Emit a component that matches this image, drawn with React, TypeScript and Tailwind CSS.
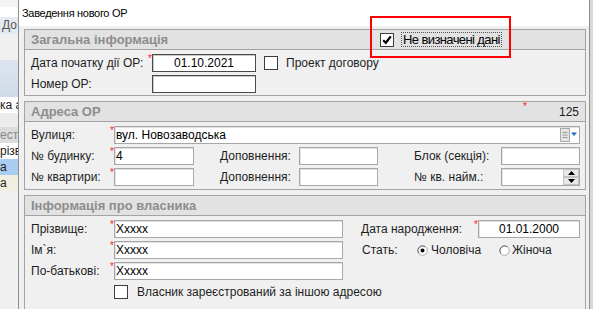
import React from 'react';

// [ 공통 요소 ]
const Star = () => (
  <span className="w-[4px] h-[18px] shrink-0 text-[10px] leading-[10px] text-[#ff2020]">*</span>
);

const Gap4 = () => <span className="w-[4px] shrink-0" />;

const Field = ({ w, value = '', center = false, dark = false, children }: { w: string; value?: string; center?: boolean; dark?: boolean; children?: React.ReactNode }) => (
  <div
    className={`${w} h-[18px] shrink-0 bg-white border flex items-center relative ${dark ? 'border-[#4a4a4a] shadow-[inset_1px_1px_0_#c8c8c8]' : 'border-[#a7a7a7] shadow-[inset_1px_1px_0_#e2e2e2]'} ${center ? 'justify-center' : 'pl-[1px]'}`}
  >
    <span className="text-[12px] text-black leading-none">{value}</span>
    {children}
  </div>
);

const Label = ({ w, children, className = '' }: { w: string; children: React.ReactNode; className?: string }) => (
  <span className={`${w} shrink-0 text-[12px] leading-[18px] text-[#1e1e1e] whitespace-nowrap ${className}`}>{children}</span>
);

const Check = ({ checked = false }: { checked?: boolean }) => (
  <span className="w-[14px] h-[14px] shrink-0 bg-white border border-[#3c3c3c] flex items-center justify-center">
    {checked && (
      <svg width="10" height="10" viewBox="0 0 10 10">
        <path d="M1.2 5.2 L3.8 7.8 L8.8 1.4" fill="none" stroke="#000" strokeWidth="2.2" />
      </svg>
    )}
  </span>
);

const Radio = ({ checked = false }: { checked?: boolean }) => (
  <svg width="11" height="11" viewBox="0 0 11 11" className="shrink-0">
    <circle cx="5.5" cy="5.5" r="4.8" fill="#fff" stroke="#a8a8a8" />
    <path d="M1.8 8.2 A4.6 4.6 0 0 1 8.2 1.8" fill="none" stroke="#6e6e6e" strokeWidth="1" />
    {checked && <circle cx="5.5" cy="5.5" r="2" fill="#000" />}
  </svg>
);

const Group = ({ title, right, children, pb }: { title: string; right?: React.ReactNode; children: React.ReactNode; pb: string }) => (
  <div className="shrink-0 border border-[#a3a3a3] flex flex-col">
    <div className="shrink-0 h-[20px] bg-[#e2e2e2] border-b border-[#a3a3a3] flex items-center pl-[6px] pr-[6px] relative">
      <span className="text-[13px] font-bold text-[#8d8d8d] leading-none">{title}</span>
      {right}
    </div>
    <div className={`flex flex-col gap-[3px] pt-[4px] ${pb} pl-[6px]`}>{children}</div>
  </div>
);

// [ 배경 창 ]
const BackLeft = () => (
  <div className="w-[18px] shrink-0 flex flex-col text-[12px] text-[#222] overflow-hidden whitespace-nowrap">
    <div className="shrink-0 h-[7px] bg-[#f4f4f4]" />
    <div className="shrink-0 h-[10px] bg-white" />
    <div className="shrink-0 h-[17px] bg-[#e4eaf2] pl-[2px] leading-[17px] text-[#555]">До</div>
    <div className="shrink-0 h-[26px] bg-[#f0f0f0]" />
    <div className="shrink-0 h-[37px] bg-gradient-to-b from-[#dde5ef] to-[#cfdbe8]" />
    <div className="shrink-0 h-[16px] bg-white leading-[16px]">ка а</div>
    <div className="shrink-0 h-[14px] bg-[#ececec]" />
    <div className="shrink-0 h-[16px] bg-[#dcdcdc] leading-[16px] text-[#888]">естр</div>
    <div className="shrink-0 h-[16px] bg-white leading-[16px]">різв</div>
    <div className="shrink-0 h-[16px] bg-[#a9cdf0] leading-[16px]">а</div>
    <div className="shrink-0 h-[16px] bg-[#f2eedf] leading-[16px]">а</div>
    <div className="flex-1 bg-[#f0f0f0]" />
  </div>
);

export default function App() {
  return (
    <div className="relative w-[593px] h-[309px] overflow-hidden flex bg-[#f0f0f0] font-['Liberation_Sans',Arial,sans-serif]">
      <BackLeft />

      {/* [ 대화상자 ] */}
      <div className="w-[572px] shrink-0 border-l border-r border-[#8f8f8f] flex flex-col bg-[#f0f0f0] overflow-hidden">
        <div className="shrink-0 h-[26px] bg-white flex items-center pl-[3px]">
          <span className="text-[11px] tracking-[-0.3px] text-black">Заведення нового ОР</span>
        </div>

        <div className="shrink-0 flex flex-col gap-[5px] pt-[3px] pl-[5px] pr-[3px]">
          {/* [ загальна інформація ] */}
          <Group
            title="Загальна інформація"
            pb="pb-[2px]"
            right={
              <div className="absolute left-[355px] top-[2px] flex items-center">
                <Check checked />
                <span className="ml-[7px] h-[15px] px-[1px] border border-dotted border-[#555] flex items-center text-[13px] tracking-[-0.6px] text-black leading-none">
                  Не визначені дані
                </span>
              </div>
            }
          >
            <div className="flex items-center">
              <Label w="w-[117px]">Дата початку дії ОР:</Label>
              <Star />
              <Field w="w-[104px]" value="01.10.2021" center dark />
              <span className="w-[8px]" />
              <Check />
              <span className="ml-[8px] text-[12px] text-[#1e1e1e]">Проект договору</span>
            </div>
            <div className="flex items-center">
              <Label w="w-[117px]">Номер ОР:</Label>
              <Gap4 />
              <Field w="w-[104px]" dark />
            </div>
          </Group>

          {/* [ адреса ] */}
          <Group
            title="Адреса ОР"
            pb="pb-[3px]"
            right={
              <div className="ml-auto flex items-center">
                <span className="text-[10px] leading-none text-[#ff2020] -mt-[9px]">*</span>
                <span className="ml-[32px] text-[12px] text-[#1e1e1e] leading-none">125</span>
              </div>
            }
          >
            <div className="flex items-center">
              <Label w="w-[79px]">Вулиця:</Label>
              <Star />
              <Field w="w-[466px]" value="вул. Новозаводська">
                <div className="absolute right-[1px] top-[1px] flex items-center">
                  <svg width="18" height="14" viewBox="0 0 18 14">
                    <rect x="0.5" y="0.5" width="9" height="13" fill="#e4e4e4" stroke="#a8a8a8" />
                    <path d="M2.5 4.5h5M2.5 7h5M2.5 9.5h5" stroke="#9a9a9a" />
                    <path d="M11 4.5h6l-3 3.5z" fill="#1f6fc8" />
                  </svg>
                </div>
              </Field>
            </div>
            <div className="flex items-center">
              <Label w="w-[79px]">№ будинку:</Label>
              <Star />
              <Field w="w-[80px]" value="4" />
              <Label w="w-[105px]" className="pl-[26px]">Доповнення:</Label>
              <Field w="w-[79px]" />
              <Label w="w-[123px]" className="pl-[36px]">Блок (секція):</Label>
              <Field w="w-[79px]" />
            </div>
            <div className="flex items-center">
              <Label w="w-[79px]">№ квартири:</Label>
              <Star />
              <Field w="w-[80px]" />
              <Label w="w-[105px]" className="pl-[26px]">Доповнення:</Label>
              <Field w="w-[79px]" />
              <Label w="w-[123px]" className="pl-[36px]">№ кв. найм.:</Label>
              <Field w="w-[79px]">
                <div className="absolute right-0 top-0 h-[16px] w-[16px] flex flex-col">
                  <div className="h-[8px] bg-[#e8e8e8] border border-[#c4c4c4] flex items-center justify-center">
                    <svg width="7" height="4" viewBox="0 0 7 4"><path d="M0 4h7L3.5 0z" fill="#000" /></svg>
                  </div>
                  <div className="h-[8px] bg-[#e8e8e8] border border-[#c4c4c4] flex items-center justify-center">
                    <svg width="7" height="4" viewBox="0 0 7 4"><path d="M0 0h7L3.5 4z" fill="#000" /></svg>
                  </div>
                </div>
              </Field>
            </div>
          </Group>

          {/* [ власник ] */}
          <Group title="Інформація про власника" pb="pb-[20px]">
            <div className="flex items-center">
              <Label w="w-[79px]">Прізвище:</Label>
              <Star />
              <Field w="w-[229px]" value="Xxxxx" />
              <Label w="w-[131px]" className="pl-[18px]">Дата народження:</Label>
              <Star />
              <Field w="w-[102px]" value="01.01.2000" center />
            </div>
            <div className="flex items-center">
              <Label w="w-[79px]">Ім`я:</Label>
              <Star />
              <Field w="w-[229px]" value="Xxxxx" />
              <Label w="w-[74px]" className="pl-[19px]">Стать:</Label>
              <Radio checked />
              <span className="ml-[3px] w-[68px] text-[12px] text-[#1e1e1e]">Чоловіча</span>
              <Radio />
              <span className="ml-[2px] text-[12px] text-[#1e1e1e]">Жіноча</span>
            </div>
            <div className="flex items-center">
              <Label w="w-[79px]">По-батькові:</Label>
              <Star />
              <Field w="w-[229px]" value="Xxxxx" />
            </div>
            <div className="flex items-center h-[18px] pl-[83px]">
              <Check />
              <span className="ml-[9px] text-[12px] text-[#1e1e1e]">Власник зареєстрований за іншою адресою</span>
            </div>
          </Group>
        </div>
      </div>

      <div className="flex-1 bg-[#d8d8d8]" />

      {/* [ червона рамка ] */}
      <div className="absolute left-[370px] top-[16px] w-[141px] h-[42px] border-2 border-[#ff0000] pointer-events-none" />
    </div>
  );
}
